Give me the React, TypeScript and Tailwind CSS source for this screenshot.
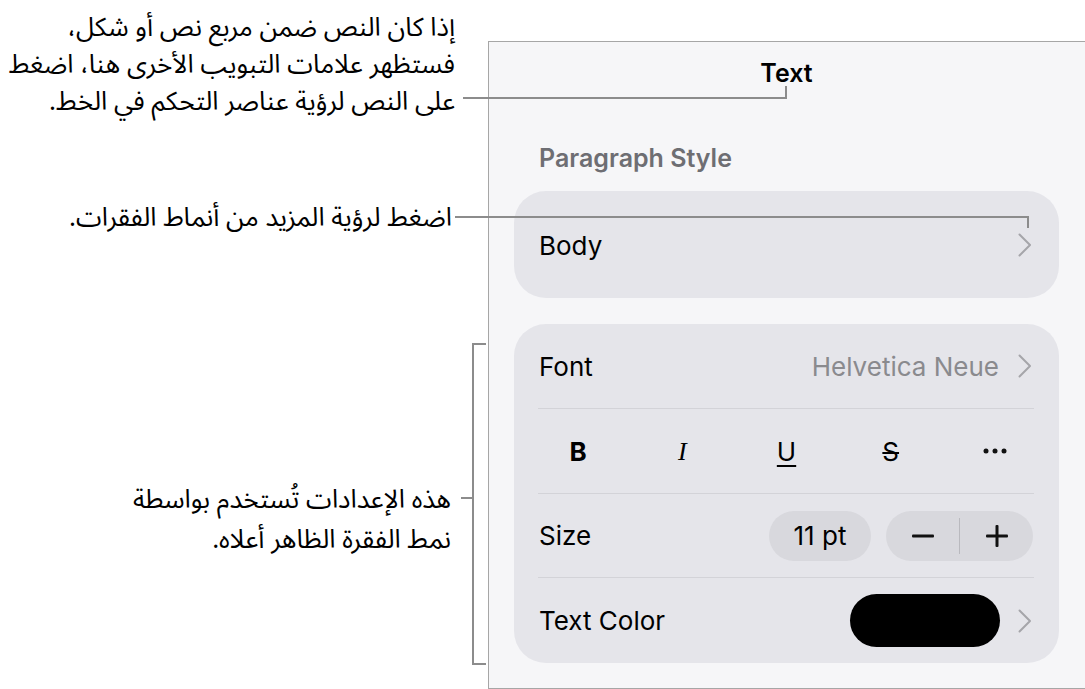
import React from 'react';

const arabic = "font-['Noto_Sans_Arabic','Noto_Naskh_Arabic','DejaVu_Sans',sans-serif]";
const latin = "font-['Inter','Liberation_Sans',sans-serif]";

function Chevron() {
  return (
    <svg width="14" height="24" viewBox="0 0 14 24" fill="none" className="shrink-0">
      <polyline points="1.5,1.5 12,12 1.5,22.5" stroke="#a5a5aa" strokeWidth="2" strokeLinecap="round" strokeLinejoin="round" />
    </svg>
  );
}

function Divider() {
  return <div className="h-px bg-[#d3d3d8] ml-[24px] mr-[25px]" />;
}

function Leader({ className }: { className: string }) {
  return <div className={`absolute bg-[#8c8c8c] ${className}`} />;
}

export default function App() {
  return (
    <div className={`relative w-[1085px] h-[689px] bg-white overflow-hidden flex ${latin}`}>
      {/* callouts */}
      <div dir="rtl" className={`w-[488px] shrink-0 flex flex-col text-[26px] text-black ${arabic}`}>
        <div className="mt-[9px] pr-[33px] leading-[37px]">
          <p>إذا كان النص ضمن مربع نص أو شكل،</p>
          <p>فستظهر علامات التبويب الأخرى هنا، اضغط</p>
          <p>على النص لرؤية عناصر التحكم في الخط.</p>
        </div>
        <p className="mt-[78px] pr-[36px] leading-[40px]">اضغط لرؤية المزيد من أنماط الفقرات.</p>
        <div className="mt-[242px] pr-[37px] leading-[40px]">
          <p>هذه الإعدادات تُستخدم بواسطة</p>
          <p>نمط الفقرة الظاهر أعلاه.</p>
        </div>
      </div>

      {/* panel */}
      <div className="mt-[41px] h-[648px] flex-1 border-l border-t border-b border-[#a6a6a6] bg-[#f6f6f8] flex flex-col pl-[25px] pr-[26px]">
        <div className="pt-[16px] text-center text-[25px] leading-[30px] font-semibold text-black">Text</div>

        <div className="mt-[55px] pl-[25px] text-[25px] leading-[30px] font-semibold text-[#6e6e73]">Paragraph Style</div>

        <div className="mt-[18px] h-[107px] rounded-[32px] bg-[#e5e5ea] flex items-center pl-[25px] pr-[27px]">
          <span className="flex-1 text-[26px] leading-[32px] pt-[2px] text-black">Body</span>
          <Chevron />
        </div>

        <div className="mt-[26px] h-[339px] rounded-[32px] bg-[#e5e5ea] flex flex-col">
          <div className="h-[84px] flex items-center pl-[25px] pr-[27px]">
            <span className="flex-1 text-[26px] text-black">Font</span>
            <span className="text-[26px] text-[#8a8a8e] mr-[19px]">Helvetica Neue</span>
            <Chevron />
          </div>
          <Divider />
          <div className="h-[84px] flex items-center px-[12px] text-[26px] text-black">
            <div className="flex-1 flex justify-center font-bold">B</div>
            <div className="flex-1 flex justify-center font-['Liberation_Serif',serif] italic">I</div>
            <div className="flex-1 flex justify-center underline underline-offset-[4px] decoration-[2px]">U</div>
            <div className="flex-1 flex justify-center line-through decoration-[2px]">S</div>
            <div className="flex-1 flex justify-center">
              <svg width="24" height="6" viewBox="0 0 24 6">
                <circle cx="3" cy="3" r="2.5" fill="#111" />
                <circle cx="12" cy="3" r="2.5" fill="#111" />
                <circle cx="21" cy="3" r="2.5" fill="#111" />
              </svg>
            </div>
          </div>
          <Divider />
          <div className="h-[83px] flex items-center pl-[25px] pr-[26px]">
            <span className="flex-1 text-[26px] text-black">Size</span>
            <div className="w-[102px] h-[50px] rounded-full bg-[#d8d8dd] flex items-center justify-center text-[26px] text-black">11 pt</div>
            <div className="ml-[15px] w-[147px] h-[50px] rounded-full bg-[#d8d8dd] flex items-center">
              <div className="flex-1 flex justify-center">
                <svg width="22" height="4" viewBox="0 0 22 4"><rect x="0" y="0.5" width="22" height="3" rx="1" fill="#111" /></svg>
              </div>
              <div className="w-px h-[36px] bg-[#b9b9be]" />
              <div className="flex-1 flex justify-center">
                <svg width="22" height="22" viewBox="0 0 22 22">
                  <rect x="0" y="9.5" width="22" height="3" rx="1" fill="#111" />
                  <rect x="9.5" y="0" width="3" height="22" rx="1" fill="#111" />
                </svg>
              </div>
            </div>
          </div>
          <Divider />
          <div className="h-[85px] flex items-center pl-[25px] pr-[27px]">
            <span className="flex-1 text-[26px] text-black">Text Color</span>
            <div className="w-[150px] h-[53px] rounded-full bg-black mr-[18px]" />
            <Chevron />
          </div>
        </div>
      </div>

      {/* leader lines */}
      <Leader className="left-[463px] top-[97px] w-[324px] h-[2px]" />
      <Leader className="left-[785px] top-[86px] w-[2px] h-[13px]" />
      <Leader className="left-[455px] top-[216px] w-[574px] h-[2px]" />
      <Leader className="left-[1027px] top-[216px] w-[2px] h-[12px]" />
      <Leader className="left-[472px] top-[343px] w-[2px] h-[322px]" />
      <Leader className="left-[472px] top-[343px] w-[14px] h-[2px]" />
      <Leader className="left-[472px] top-[663px] w-[14px] h-[2px]" />
      <Leader className="left-[461px] top-[497px] w-[13px] h-[2px]" />
    </div>
  );
}
